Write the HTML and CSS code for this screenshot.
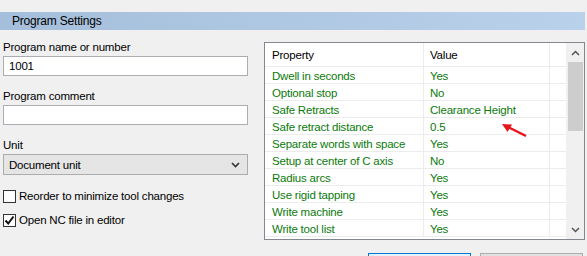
FILE: index.html
```html
<!DOCTYPE html>
<html lang="en">

<head>
    <meta charset="UTF-8">
    <title>Program Settings</title>
    <link rel="stylesheet" href="styles.css">
</head>

<body>
    <div class="title-bar">Program Settings</div>

    <div class="settings">
        <div class="left-column">
            <label class="field-label" for="programName">Program name or number</label>
            <input class="text-input" id="programName" type="text" value="1001">

            <label class="field-label spaced" for="programComment">Program comment</label>
            <input class="text-input" id="programComment" type="text" value="">

            <label class="field-label spaced" for="unitSelect">Unit</label>
            <div class="select-box" id="unitSelect">
                <span>Document unit</span>
                <svg class="chevron" width="9" height="6" viewBox="0 0 9 6">
                    <path d="M1 1 L4.5 4.5 L8 1" fill="none" stroke="#333" stroke-width="1.6" />
                </svg>
            </div>

            <div class="check-row first">
                <span class="check-box"></span>
                <span>Reorder to minimize tool changes</span>
            </div>
            <div class="check-row">
                <span class="check-box">
                    <svg width="11" height="11" viewBox="0 0 11 11">
                        <path d="M1.5 5.5 L4.2 8.5 L9.5 1.5" fill="none" stroke="#111" stroke-width="2" />
                    </svg>
                </span>
                <span>Open NC file in editor</span>
            </div>
        </div>

        <div class="right-column">
            <div class="property-list">
                <div class="list-body">
                    <div class="list-row header">
                        <div class="cell name">Property</div>
                        <div class="cell value">Value</div>
                        <div class="cell spare"></div>
                    </div>
                    <div class="list-row"><div class="cell name">Dwell in seconds</div><div class="cell value">Yes</div><div class="cell spare"></div></div>
                    <div class="list-row"><div class="cell name">Optional stop</div><div class="cell value">No</div><div class="cell spare"></div></div>
                    <div class="list-row"><div class="cell name">Safe Retracts</div><div class="cell value">Clearance Height</div><div class="cell spare"></div></div>
                    <div class="list-row"><div class="cell name">Safe retract distance</div><div class="cell value">0.5</div><div class="cell spare"></div></div>
                    <div class="list-row"><div class="cell name">Separate words with space</div><div class="cell value">Yes</div><div class="cell spare"></div></div>
                    <div class="list-row"><div class="cell name">Setup at center of C axis</div><div class="cell value">No</div><div class="cell spare"></div></div>
                    <div class="list-row"><div class="cell name">Radius arcs</div><div class="cell value">Yes</div><div class="cell spare"></div></div>
                    <div class="list-row"><div class="cell name">Use rigid tapping</div><div class="cell value">Yes</div><div class="cell spare"></div></div>
                    <div class="list-row"><div class="cell name">Write machine</div><div class="cell value">Yes</div><div class="cell spare"></div></div>
                    <div class="list-row"><div class="cell name">Write tool list</div><div class="cell value">Yes</div><div class="cell spare"></div></div>

                    <!-- red annotation arrow pointing at the Safe Retracts value -->
                    <svg class="annotation" width="30" height="18" viewBox="0 0 30 18">
                        <path d="M26 15 L8 6" stroke="#e8131b" stroke-width="2.4" />
                        <path d="M2 3 L12 3.5 L7.5 11 Z" fill="#e8131b" />
                    </svg>
                </div>
                <div class="scrollbar">
                    <svg class="scroll-arrow" width="9" height="6" viewBox="0 0 9 6">
                        <path d="M1 5 L4.5 1.5 L8 5" fill="none" stroke="#555" stroke-width="1.5" />
                    </svg>
                    <div class="scroll-track">
                        <div class="scroll-thumb"></div>
                    </div>
                    <svg class="scroll-arrow" width="9" height="6" viewBox="0 0 9 6">
                        <path d="M1 1 L4.5 4.5 L8 1" fill="none" stroke="#555" stroke-width="1.5" />
                    </svg>
                </div>
            </div>

            <!-- dialog buttons, their captions fall below the visible area -->
            <div class="dialog-buttons">
                <button type="button" class="btn primary"></button>
                <button type="button" class="btn"></button>
            </div>
        </div>
    </div>
</body>

</html>
```

FILE: styles.css
```css
:root {
    --window-color: #f0f0f0;
    --text-color: #000000;
    --green-text: #0b7a0b;
    --border-color: #abadb3;
    --grid-line: #ececec;
}

html {
    overflow: hidden;
}

body {
    font-family: "Liberation Sans", Arial, sans-serif;
    font-size: 11px;
    letter-spacing: -0.2px;
    margin: 0;
    background-color: var(--window-color);
    color: var(--text-color);
    height: 256px;
    overflow: hidden;
}

.title-bar {
    margin-top: 12px;
    width: 573px;
    height: 18px;
    line-height: 19px;
    padding-left: 12px;
    font-size: 12px;
    background: linear-gradient(to right, #a5bedb, #b9d1ea);
}

.settings {
    display: flex;
    padding-left: 3px;
}

.left-column {
    width: 245px;
    display: flex;
    flex-direction: column;
    padding-top: 10px;
}

.field-label {
    display: block;
    line-height: 15px;
    height: 15px;
    margin-bottom: 1px;
    font-size: 11.5px;
}

.field-label.spaced {
    margin-top: 13px;
}

.text-input {
    box-sizing: border-box;
    width: 245px;
    height: 20px;
    margin: 0;
    padding: 0 5px;
    border: 1px solid var(--border-color);
    background: #ffffff;
    font-family: inherit;
    font-size: 11.5px;
    letter-spacing: -0.2px;
    color: var(--text-color);
    outline: none;
}

.select-box {
    box-sizing: border-box;
    width: 245px;
    height: 21px;
    display: flex;
    align-items: center;
    justify-content: space-between;
    padding: 0 5px 0 5px;
    border: 1px solid #acacac;
    background: #e5e5e5;
    font-size: 11.5px;
}

.chevron {
    margin-right: 2px;
}

.check-row {
    display: flex;
    align-items: center;
    gap: 3px;
    height: 14px;
    margin-top: 10px;
    font-size: 11.5px;
}

.check-row.first {
    margin-top: 14px;
}

.check-box {
    box-sizing: border-box;
    width: 13px;
    height: 13px;
    border: 1px solid #333333;
    background: #ffffff;
    display: flex;
    align-items: center;
    justify-content: center;
}

.right-column {
    margin-left: 16px;
    padding-top: 12px;
}

.property-list {
    box-sizing: border-box;
    width: 321px;
    height: 198px;
    border: 1px solid #828790;
    background: #ffffff;
    display: flex;
}

.list-body {
    position: relative;
    flex: 1;
}

.list-row {
    display: flex;
    height: 17px;
    border-bottom: 1px solid var(--grid-line);
    box-sizing: border-box;
    color: var(--green-text);
    font-size: 11.5px;
}

.list-row.header {
    height: 24px;
    color: var(--text-color);
}

.cell {
    display: flex;
    align-items: center;
    padding-left: 7px;
    padding-top: 2px;
    box-sizing: border-box;
    border-right: 1px solid var(--grid-line);
}

.list-row.header .cell {
    padding-top: 1px;
}

.cell.name {
    width: 159px;
}

.cell.value {
    width: 126px;
    padding-left: 6px;
}

.cell.spare {
    flex: 1;
    border-right: none;
}

.annotation {
    position: absolute;
    left: 235px;
    top: 78px;
}

.scrollbar {
    width: 18px;
    background: #f0f0f0;
    display: flex;
    flex-direction: column;
    align-items: center;
}

.scroll-arrow {
    margin: 7px 0 6px;
}

.scroll-track {
    flex: 1;
    width: 100%;
    display: flex;
    justify-content: center;
}

.scroll-thumb {
    width: 15px;
    height: 69px;
    background: #cdcdcd;
}

.dialog-buttons {
    display: flex;
    justify-content: flex-end;
    gap: 9px;
    margin-top: 13px;
    padding-right: 2px;
}

.btn {
    width: 103px;
    height: 23px;
    border: 1px solid #adadad;
    background: #e1e1e1;
    font-family: inherit;
    font-size: 11.5px;
}

.btn.primary {
    border-color: #0078d7;
    background: #e5f1fb;
}
```
